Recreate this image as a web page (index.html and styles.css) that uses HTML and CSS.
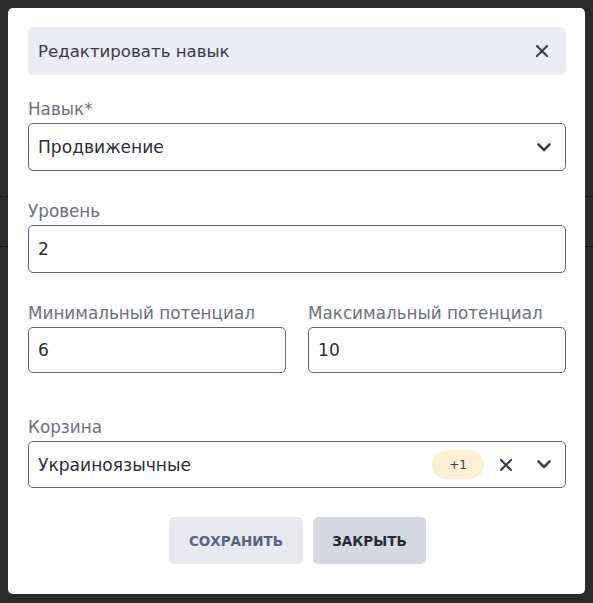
FILE: index.html
```html
<!DOCTYPE html>
<html lang="ru">
<head>
<meta charset="utf-8">
<title>Редактировать навык</title>
<link rel="stylesheet" href="styles.css">
</head>
<body>
<div class="backdrop">
  <div class="bg-row bg-row-first"></div>
  <div class="bg-row"></div>
</div>
<div class="modal">
  <div class="modal-header">
    <span class="modal-title">Редактировать навык</span>
    <svg class="icon-x" width="12" height="12" viewBox="0 0 12 12"><path d="M1 1L11 11M11 1L1 11"/></svg>
  </div>

  <div class="field field-first">
    <label class="label">Навык*</label>
    <div class="control control-48">
      <span class="value">Продвижение</span>
      <svg class="icon-chev" width="14" height="9" viewBox="0 0 14 9"><path d="M1.5 1.5L7 7L12.5 1.5"/></svg>
    </div>
  </div>

  <div class="field">
    <label class="label">Уровень</label>
    <div class="control control-48">
      <span class="value">2</span>
    </div>
  </div>

  <div class="field">
    <div class="row2">
      <div>
        <label class="label">Минимальный потенциал</label>
        <div class="control control-46"><span class="value">6</span></div>
      </div>
      <div>
        <label class="label">Максимальный потенциал</label>
        <div class="control control-46"><span class="value">10</span></div>
      </div>
    </div>
  </div>

  <div class="field field-basket">
    <label class="label">Корзина</label>
    <div class="control control-47">
      <span class="value">Украиноязычные</span>
      <span class="badge">+1</span>
      <svg class="icon-x icon-clear" width="12" height="12" viewBox="0 0 12 12"><path d="M1 1L11 11M11 1L1 11"/></svg>
      <svg class="icon-chev" width="14" height="9" viewBox="0 0 14 9"><path d="M1.5 1.5L7 7L12.5 1.5"/></svg>
    </div>
  </div>

  <div class="actions">
    <button class="btn btn-save">СОХРАНИТЬ</button>
    <button class="btn btn-close">ЗАКРЫТЬ</button>
  </div>
</div>
</body>
</html>
```

FILE: styles.css
```css
* { box-sizing: border-box; }

html, body {
  margin: 0;
  padding: 0;
  width: 593px;
  height: 603px;
  overflow: hidden;
  background: #2b2b2b;
  font-family: "DejaVu Sans", "Liberation Sans", sans-serif;
}

.backdrop {
  padding-top: 196px;
}

.bg-row {
  height: 50px;
  border-top: 1px dashed #0d0d0d;
}

.bg-row-first {
  height: 50px;
}

.modal {
  position: absolute;
  top: 8px;
  left: 8px;
  width: 577px;
  background: #ffffff;
  border-radius: 5px;
  padding: 19px 19px 30px 20px;
}

.modal-header {
  height: 48px;
  background: #ebecf1;
  border-radius: 5px;
  display: flex;
  align-items: center;
  padding: 0 18px 0 10px;
}

.modal-title {
  flex: 1;
  font-size: 16.6px;
  color: #3a3d48;
}

.icon-x path {
  fill: none;
  stroke: #3c4050;
  stroke-width: 2.2;
  stroke-linecap: round;
}

.icon-chev path {
  fill: none;
  stroke: #3c4256;
  stroke-width: 2.6;
  stroke-linecap: round;
  stroke-linejoin: round;
}

.field {
  margin-top: 29px;
}

.field-first {
  margin-top: 23px;
}

.field-basket {
  margin-top: 43px;
}

.label {
  display: block;
  font-size: 16.8px;
  line-height: 22px;
  color: #6d707b;
  margin-bottom: 3px;
  white-space: nowrap;
}

.control {
  display: flex;
  align-items: center;
  border: 1px solid #5f6785;
  border-radius: 5px;
  padding: 0 14px 0 9px;
  background: #fff;
}

.control-48 { height: 48px; }
.control-47 { height: 47px; }
.control-46 { height: 46px; }

.value {
  flex: 1;
  font-size: 17.1px;
  color: #2c2f39;
  white-space: nowrap;
}

.row2 {
  display: grid;
  grid-template-columns: 1fr 1fr;
  column-gap: 22px;
}

.badge {
  width: 52px;
  height: 29px;
  border-radius: 15px;
  background: #fcefd4;
  color: #3b3b3b;
  font-size: 12px;
  display: flex;
  align-items: center;
  justify-content: center;
}

.icon-clear {
  margin-left: 16px;
  margin-right: 25px;
}

.actions {
  margin-top: 29px;
  display: flex;
  justify-content: center;
  gap: 10px;
  padding-left: 1px;
}

.btn {
  height: 47px;
  border: none;
  border-radius: 5px;
  font-family: "DejaVu Sans", "Liberation Sans", sans-serif;
  font-weight: bold;
  font-size: 13.5px;
  padding: 0;
}

.btn-save {
  width: 134px;
  background: #e8e9ef;
  color: #5b6283;
}

.btn-close {
  width: 113px;
  background: #d5d8e2;
  color: #272a34;
}
```
